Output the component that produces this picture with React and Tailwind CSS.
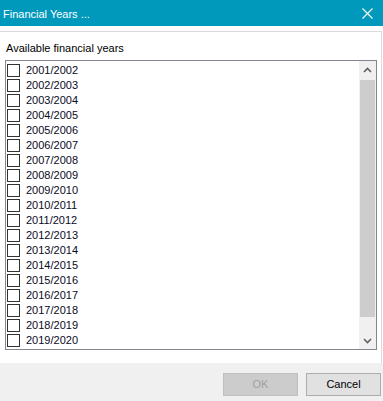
const years = [
  "2001/2002", "2002/2003", "2003/2004", "2004/2005", "2005/2006", "2006/2007",
  "2007/2008", "2008/2009", "2009/2010", "2010/2011", "2011/2012", "2012/2013",
  "2013/2014", "2014/2015", "2015/2016", "2016/2017", "2017/2018", "2018/2019",
  "2019/2020",
]

const Chevron = ({ up }) => (
  <svg width="9" height="6" viewBox="0 0 9 6">
    <path
      d={up ? "M1 5 L4.5 1.5 L8 5" : "M1 1 L4.5 4.5 L8 1"}
      fill="none"
      stroke="#606060"
      strokeWidth="1.6"
    />
  </svg>
)

const App = () => {
  return (
    <div
      className="w-[383px] h-[401px] flex flex-col bg-white overflow-hidden text-[11px]"
      style={{ fontFamily: '"Liberation Sans", Arial, sans-serif' }}
    >
      {/* title bar */}
      <div className="h-[26px] shrink-0 bg-[#0099bc] flex items-center justify-between pl-[3px] pt-[2px] text-white">
        <span>Financial Years ...</span>
        <svg width="11" height="11" viewBox="0 0 11 11" className="mr-[10px] -mt-[1px]">
          <path d="M0.5 0.5 L10.5 10.5 M10.5 0.5 L0.5 10.5" stroke="#fff" strokeWidth="1.1" />
        </svg>
      </div>

      <div className="h-[5px] shrink-0" />

      {/* panel */}
      <div className="w-[382px] flex-1 border-t border-r border-[#dadada] pt-[9px] pl-[5px]">
        <div className="h-[15px] leading-[15px] pl-px text-black mb-[4px]">Available financial years</div>

        <div className="w-[372px] h-[290px] border border-[#828790] flex">
          <div className="flex-1 pt-[2px] pl-px">
            {years.map((y) => (
              <div key={y} className="h-[15px] flex items-center">
                <div className="w-[13px] h-[13px] border border-[#333333] bg-white" />
                <span className="ml-[6px] text-[#0a0a24] leading-[15px]">{y}</span>
              </div>
            ))}
          </div>

          {/* scrollbar */}
          <div className="w-[17px] bg-[#f0f0f0] flex flex-col">
            <div className="h-[17px] flex items-center justify-center">
              <Chevron up />
            </div>
            <div className="flex-1 px-px pt-[2px]">
              <div className="h-[237px] bg-[#cdcdcd]" />
            </div>
            <div className="h-[17px] flex items-center justify-center">
              <Chevron />
            </div>
          </div>
        </div>
      </div>

      {/* footer */}
      <div className="h-[38px] shrink-0 bg-[#f0f0f0] flex justify-end items-start gap-[8px] pt-[10px] pr-[2px]">
        <div className="w-[75px] h-[23px] border border-[#bfbfbf] bg-[#cccccc] text-[#a0a0a0] flex items-center justify-center">
          OK
        </div>
        <div className="w-[75px] h-[23px] border border-[#adadad] bg-[#e1e1e1] text-black flex items-center justify-center">
          Cancel
        </div>
      </div>
    </div>
  )
}

export default App
